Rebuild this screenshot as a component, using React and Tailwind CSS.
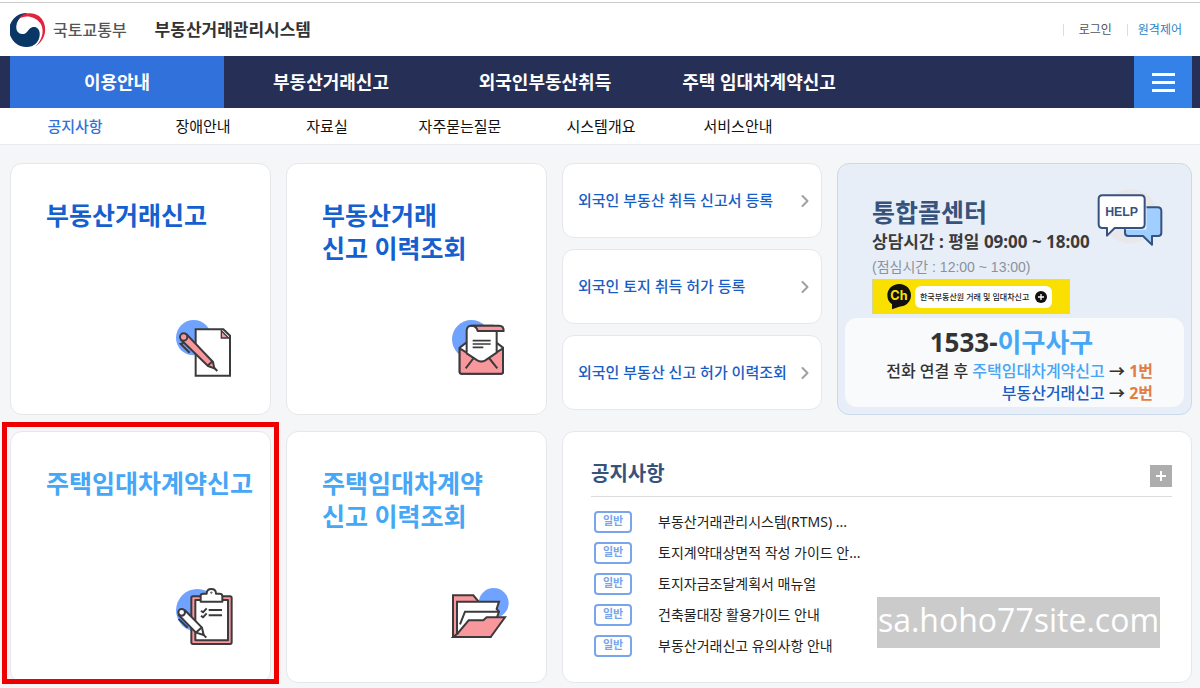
import { ChevronRight } from "lucide-react";

const MENUS = ["이용안내", "부동산거래신고", "외국인부동산취득", "주택 임대차계약신고"];

const SUB_MENUS = [
  { label: "공지사항", width: "w-[128px]" },
  { label: "장애안내", width: "w-[128px]" },
  { label: "자료실", width: "w-[120px]" },
  { label: "자주묻는질문", width: "w-[146px]" },
  { label: "시스템개요", width: "w-[136px]" },
  { label: "서비스안내", width: "w-[138px]" },
];

const QUICK_LINKS = [
  "외국인 부동산 취득 신고서 등록",
  "외국인 토지 취득 허가 등록",
  "외국인 부동산 신고 허가 이력조회",
];

const NOTICES = [
  "부동산거래관리시스템(RTMS) ...",
  "토지계약대상면적 작성 가이드 안...",
  "토지자금조달계획서 매뉴얼",
  "건축물대장 활용가이드 안내",
  "부동산거래신고 유의사항 안내",
];

const GovLogo = () => (
  <svg className="size-9" viewBox="29 36 108 108" aria-hidden="true">
    <path
      fill="#0b3766"
      d="M76 39A51 51 0 0 0 80 141C104 141 120 122 118 98C116 80 98 76 88 86C80 95 76 103 65 102C52 101 47 90 48 79C49 66 55 56 64 50C70 46 76 44 84 43Z"
    />
    <path
      fill="#e0243c"
      d="M54 57C66 38 96 33 117 49C144 72 140 120 104 140C127 120 133 90 120 70C104 47 74 44 54 57Z"
    />
  </svg>
);

const PaperIcon = () => (
  <svg className="size-[60px]" viewBox="42 54 180 180" fill="none" stroke="#3c3a3d" strokeWidth="6" aria-hidden="true">
    <circle cx="101" cy="113" r="53" fill="#6fa3ff" stroke="none" />
    <path d="M107 88H190L210 107V227H107Z" fill="#fff" />
    <path d="M184 92V114H206Z" fill="#f8979c" strokeWidth="4" />
    <path d="M63 119L144 198L163 205L159 186L80 103Z" fill="#f8979c" strokeLinejoin="round" />
    <circle cx="71" cy="111" r="11" fill="#f8979c" />
    <path d="M144 196L158 184M163 204L172 213" />
    <path d="M71 129L62 132L89 158" />
  </svg>
);

const LetterIcon = () => (
  <svg className="size-[60px]" viewBox="30 54 180 180" fill="none" stroke="#3c3a3d" strokeWidth="6" strokeLinejoin="round" aria-hidden="true">
    <circle cx="94" cy="118" r="58" fill="#6fa3ff" stroke="none" />
    <path d="M59 143L80 127H168L189 143V215Q189 221 183 221H65Q59 221 59 215Z" fill="#fff" />
    <path d="M59 145L80 158L124 184L168 158L189 145V215Q189 221 183 221H65Q59 221 59 215Z" fill="#f8979c" />
    <path d="M80 160V90Q82 77 94 77H160L170 92V158L136 181Q124 188 112 181Z" fill="#fff" />
    <path d="M94 77H178Q191 77 191 93H113Q110 77 94 77Z" fill="#f8979c" />
    <path d="M98 122H152M98 132H152M98 142H130" strokeWidth="5" />
    <path d="M101 174L77 205M147 174L172 205" />
  </svg>
);

const ClipboardIcon = () => (
  <svg className="size-[60px]" viewBox="42 48 180 180" fill="none" stroke="#3c3a3d" strokeWidth="6" strokeLinejoin="round" aria-hidden="true">
    <circle cx="112" cy="121" r="64" fill="#6fa3ff" stroke="none" />
    <rect x="94" y="79" width="121" height="143" rx="5" fill="#f8979c" />
    <rect x="106" y="90" width="98" height="121" fill="#fff" />
    <path d="M122 95V77Q122 71 130 71H140Q140 57 154 57T168 71H178Q187 71 187 78V95Z" fill="#fff" />
    <circle cx="154" cy="68" r="2" strokeWidth="3" />
    <path d="M146 120H186M146 136H186M123 122L129 127L140 115M123 137L129 142L140 130" />
    <path d="M56 135L108 188L131 195L126 173L74 120Z" fill="#fff" />
    <circle cx="65" cy="127" r="10" fill="#fff" />
    <path d="M109 187L124 173M129 193L139 203M56 147L83 173" />
  </svg>
);

const FolderIcon = () => (
  <svg className="size-[60px]" viewBox="60 48 180 180" fill="none" stroke="#3c3a3d" strokeWidth="6" aria-hidden="true">
    <circle cx="191" cy="99" r="45" fill="#6fa3ff" stroke="none" />
    <path d="M69 76H130L145 94V201H69Z" fill="#f8979c" />
    <path d="M81 95H207L200 117L207 125L201 142L182 200H81Z" fill="#fff" />
    <path d="M90 163L105 125H207" />
    <path d="M83 190L116 151H160L170 142H225L182 201H70Z" fill="#f8979c" />
    <path d="M69 80V201H84M81 95V190H86" />
  </svg>
);

const HelpIcon = () => (
  <svg className="-mt-2 h-[58px] w-[66px] shrink-0" viewBox="800 105 198 174" fill="none" stroke="#37527f" strokeWidth="6" strokeLinejoin="round" aria-hidden="true">
    <circle cx="900" cy="190" r="82" fill="#e8e8eb" stroke="none" />
    <path
      d="M890 163H982Q993 163 993 174V239Q993 249 983 249H965V275L938 249H894Q884 249 884 239V174Z"
      fill="#a0ceff"
    />
    <path d="M946 160V228H886" stroke="#e7eef7" strokeWidth="5" />
    <path
      d="M816 127H932Q943 127 943 138V214Q943 225 932 225H853L830 248V225H816Q805 225 805 214V138Q805 127 816 127Z"
      fill="#fff"
    />
    <text x="874" y="190" textAnchor="middle" fontSize="37" fontWeight="700" fontFamily="Liberation Sans Narrow, Liberation Sans, sans-serif" fill="#37527f" stroke="none">
      HELP
    </text>
  </svg>
);

const KakaoIcon = () => (
  <svg className="h-[26px] w-6" viewBox="172 390 72 78" aria-hidden="true">
    <path d="M209 390C229 390 244 405 244 424S229 458 209 458L187 466V451C178 445 173 436 173 424C173 405 188 390 209 390Z" fill="#111" />
    <text x="208" y="437" textAnchor="middle" fontSize="38" fontWeight="700" fontFamily="Inter, sans-serif" fill="#f9e000">
      Ch
    </text>
  </svg>
);

/** White tile with a title at the top and a drawing in the bottom right corner */
const MenuCard = ({ lines, color, icon, highlighted = false }) => (
  <a
    href="#"
    className="relative flex h-[252px] flex-col justify-between rounded-xl border border-[#e6e7ea] bg-white pt-[35px] pb-9 pl-[35px]"
  >
    <strong className={`text-[25px] leading-[33px] font-bold whitespace-nowrap ${color}`}>
      {lines.map((line) => (
        <span key={line} className="block">
          {line}
        </span>
      ))}
    </strong>
    <span className="self-end pr-9">{icon}</span>
    {highlighted && (
      <span className="pointer-events-none absolute -inset-x-[9px] -top-[10px] -bottom-[2px] border-[5px] border-[#ee0000]" />
    )}
  </a>
);

const Header = () => (
  <header className="bg-white">
    <div className="mt-0.5 flex h-[54px] items-center justify-between border-t border-[#cccccc] pr-[18px] pl-2.5">
      <div className="flex items-center">
        <a href="#" className="flex items-center gap-[7px] text-[16px] font-medium text-[#555555]">
          <GovLogo />
          국토교통부
        </a>
        <h1 className="ml-7 text-[17px] font-bold text-[#333333]">부동산거래관리시스템</h1>
      </div>
      <div className="flex items-center text-xs leading-3">
        <a href="#" className="border-l border-[#dddddd] px-[15px] text-[#555555]">
          로그인
        </a>
        <a href="#" className="border-l border-[#dddddd] pl-2.5 text-[#2b83c6]">
          원격제어
        </a>
      </div>
    </div>

    <nav className="flex h-[52px] justify-between bg-[#262f55] pr-2 pl-2.5">
      <ul className="flex">
        {MENUS.map((menu, index) => (
          <li key={menu} className="w-[214px]">
            <a
              href="#"
              className={`flex h-full items-center justify-center text-lg font-bold text-white ${
                index === 0 ? "bg-[#3071dc]" : ""
              }`}
            >
              {menu}
            </a>
          </li>
        ))}
      </ul>
      <button
        type="button"
        aria-label="전체메뉴"
        className="flex w-[58px] flex-col items-center justify-center gap-[5px] bg-[#3482e8]"
      >
        <span className="h-[3px] w-[23px] bg-white" />
        <span className="h-[3px] w-[23px] bg-white" />
        <span className="h-[3px] w-[23px] bg-white" />
      </button>
    </nav>

    <ul className="flex h-[37px] items-center border-b border-[#e9ebee] pl-[11px] text-[15px]">
      {SUB_MENUS.map(({ label, width }, index) => (
        <li key={label} className={`${width} text-center`}>
          <a href="#" className={index === 0 ? "font-medium text-[#3071dc]" : "text-[#111111]"}>
            {label}
          </a>
        </li>
      ))}
    </ul>
  </header>
);

const CallCenter = () => (
  <section className="flex h-[252px] flex-col justify-between rounded-xl border border-[#cbdaea] bg-[#e7eef7] px-[7px] pb-[7px]">
    <div className="pt-8 pr-[21px] pl-[27px]">
      <div className="flex items-start justify-between">
        <div className="whitespace-nowrap">
          <h2 className="text-[25px] leading-8 font-bold text-[#37527b]">통합콜센터</h2>
          <p className="text-[17px] leading-[27px] font-bold text-[#3b3b3b]">상담시간 : 평일 09:00 ~ 18:00</p>
          <p className="font-['Liberation_Sans','Noto_Sans_CJK_KR',sans-serif] text-sm leading-6 text-[#8b929c]">
            (점심시간 : 12:00 ~ 13:00)
          </p>
        </div>
        <HelpIcon />
      </div>
      <a href="#" className="flex h-[35px] w-[198px] items-center gap-1 border border-[#d6d794] bg-[#f9e000] pl-3.5">
        <KakaoIcon />
        <span className="flex h-[22px] items-center gap-1.5 rounded-md bg-white px-[5px] text-[8px] font-medium whitespace-nowrap text-[#222222]">
          한국부동산원 거래 및 임대차신고
          <svg className="size-3" viewBox="0 0 12 12" aria-hidden="true">
            <circle cx="6" cy="6" r="6" fill="#111" />
            <path d="M6 3V9M3 6H9" stroke="#fff" strokeWidth="1.3" />
          </svg>
        </span>
      </a>
    </div>
    <div className="rounded-xl bg-[#f8fafc] px-[31px] pt-1.5 pb-[3px] text-right text-[16px] leading-[22px] font-medium whitespace-nowrap text-[#333333]">
      <p className="pr-1.5 text-center text-[26px] leading-9 font-bold">
        1533-<span className="text-[#45a7f5]">이구사구</span>
      </p>
      <p>
        전화 연결 후 <span className="text-[#45a7f5]">주택임대차계약신고</span> <b>→</b>{" "}
        <span className="font-bold text-[#e27e42]">1번</span>
      </p>
      <p>
        <span className="text-[#1a5dc4]">부동산거래신고</span> <b>→</b>{" "}
        <span className="font-bold text-[#e27e42]">2번</span>
      </p>
    </div>
  </section>
);

const NoticeBoard = () => (
  <section className="relative col-span-2 h-[252px] rounded-xl border border-[#e6e7ea] bg-white px-[19px] pt-6 pl-7">
    <div className="flex h-[41px] items-center justify-between border-b border-[#dcdcdc]">
      <h2 className="pb-1 text-xl leading-7 font-bold text-[#37527b]">공지사항</h2>
      <button
        type="button"
        aria-label="공지사항 더보기"
        className="flex size-[22px] items-center justify-center bg-[#adadad]"
      >
        <svg className="size-3" viewBox="0 0 12 12" aria-hidden="true">
          <path d="M6 1V11M1 6H11" stroke="#fff" strokeWidth="2" />
        </svg>
      </button>
    </div>
    <ul className="pt-[9px] pl-[3px]">
      {NOTICES.map((notice) => (
        <li key={notice} className="flex h-[31px] items-center gap-[26px]">
          <span className="flex h-[22px] w-[38px] items-center justify-center rounded-[4px] border-2 border-[#79a5ec] text-[11px] font-bold text-[#79a5ec]">
            일반
          </span>
          <a href="#" className="text-sm text-[#222222]">
            {notice}
          </a>
        </li>
      ))}
    </ul>
    <p className="absolute right-[31px] bottom-[34px] h-[51px] bg-[#cbcbcb] px-px font-['Open_Sans',sans-serif] text-[32px] leading-[46px] text-white">
      sa.hoho77site.com
    </p>
  </section>
);

const App = () => {
  return (
    <div className="min-h-screen bg-[#f5f6f8] font-['Noto_Sans','Noto_Sans_CJK_KR',sans-serif]">
      <Header />
      <main className="grid grid-cols-[261fr_261fr_260fr_355fr] gap-x-[15px] gap-y-4 pt-[18px] pr-2 pb-[5px] pl-2.5">
        <MenuCard lines={["부동산거래신고"]} color="text-[#1560cf]" icon={<PaperIcon />} />
        <MenuCard lines={["부동산거래", "신고 이력조회"]} color="text-[#1560cf]" icon={<LetterIcon />} />
        <div className="flex flex-col gap-[11px]">
          {QUICK_LINKS.map((link) => (
            <a
              key={link}
              href="#"
              className="flex h-[75px] items-center justify-between rounded-xl border border-[#e6e7ea] bg-white pr-1.5 pl-[15px] text-[15px] font-medium whitespace-nowrap text-[#1a5dc4]"
            >
              {link}
              <ChevronRight className="size-5 text-[#a0a0a0]" strokeWidth={2.5} />
            </a>
          ))}
        </div>
        <CallCenter />
        <MenuCard lines={["주택임대차계약신고"]} color="text-[#45a7f5]" icon={<ClipboardIcon />} highlighted />
        <MenuCard lines={["주택임대차계약", "신고 이력조회"]} color="text-[#45a7f5]" icon={<FolderIcon />} />
        <NoticeBoard />
      </main>
    </div>
  );
};

export default App;
